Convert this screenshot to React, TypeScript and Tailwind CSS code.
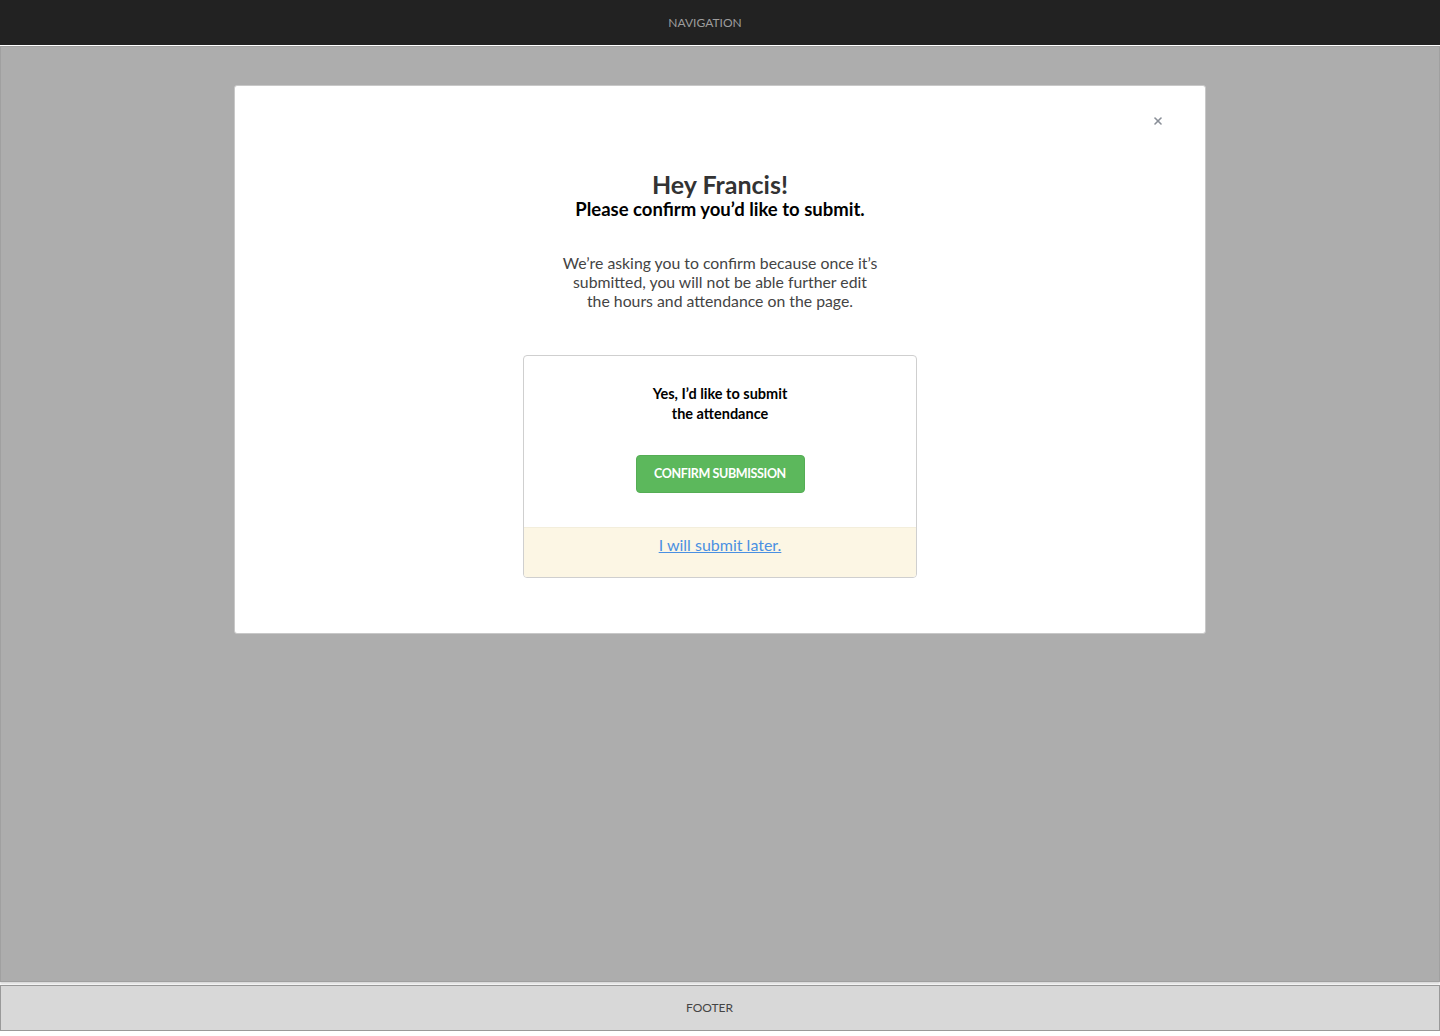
import { X } from 'lucide-react';

const font = { fontFamily: 'Lato, "Open Sans", sans-serif' };

export default function App() {
  return (
    <div className="bg-white w-[1440px] h-[1036px]" style={font}>
      <nav className="h-[45px] bg-[#222222] flex items-center justify-center pr-[30px] border-b border-white box-content">
        <span className="text-[12px] text-[#9d9d9d]">NAVIGATION</span>
      </nav>

      <main className="h-[936px] bg-[#adadad] border border-[#a0a0a0] shadow-[0_2px_2px_rgba(0,0,0,0.15)] pt-[38px]">
        <div className="relative mx-auto w-[972px] h-[549px] bg-white border border-[#c8c8c8] rounded-[3px] pt-[84px] flex flex-col items-center">
          <button className="absolute right-[41px] top-[29px] text-[#8a8f98]">
            <X className="h-[12px] w-[12px]" strokeWidth={3.2} />
          </button>

          <h1 className="text-[25px] leading-[28px] font-bold text-[#333]">Hey Francis!</h1>
          <h2 className="text-[18.5px] leading-[22px] font-bold text-black">Please confirm you’d like to submit.</h2>

          <p className="mt-[33px] text-center text-[15.8px] leading-[19px] text-[#444]">
            We’re asking you to confirm because once it’s
            <br />
            submitted, you will not be able further edit
            <br />
            the hours and attendance on the page.
          </p>

          <div className="mt-[45px] w-[394px] border border-[#cfcfcf] rounded-[4px] overflow-hidden">
            <div className="pt-[28px] pb-[34px] flex flex-col items-center">
              <p className="text-[14.5px] leading-[20px] font-bold text-black text-center">
                Yes, I’d like to submit
                <br />
                the attendance
              </p>
              <button className="mt-[31px] w-[169px] h-[38px] bg-[#5cb85c] rounded-[4px] text-white text-[12.5px] font-bold tracking-[-0.03em] border border-[#55ad55]">
                CONFIRM SUBMISSION
              </button>
            </div>
            <div className="h-[50px] bg-[#fcf6e4] border-t border-[#f3eedc] pt-[5px] text-center">
              <a href="#" className="text-[16px] leading-[20px] text-[#4a90e2] underline">
                I will submit later.
              </a>
            </div>
          </div>
        </div>
      </main>

      <footer className="mt-[3px] h-[46px] bg-[#d8d8d8] border border-[#999] flex items-center justify-center pr-[21px]">
        <span className="text-[12px] text-[#444]">FOOTER</span>
      </footer>
    </div>
  );
}
